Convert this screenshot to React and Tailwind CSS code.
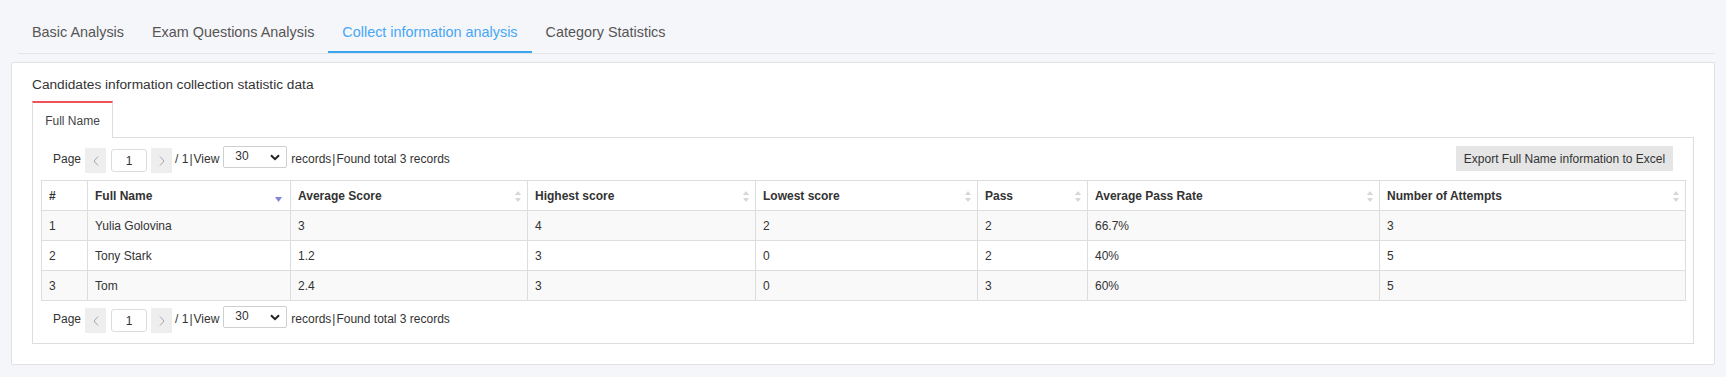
import React from 'react'

const tabs = ['Basic Analysis', 'Exam Questions Analysis', 'Collect information analysis', 'Category Statistics']

const columns = [
  { label: '#', width: 46 },
  { label: 'Full Name', width: 203, sort: 'desc' },
  { label: 'Average Score', width: 237, sort: 'both' },
  { label: 'Highest score', width: 228, sort: 'both' },
  { label: 'Lowest score', width: 222, sort: 'both' },
  { label: 'Pass', width: 110, sort: 'both' },
  { label: 'Average Pass Rate', width: 292, sort: 'both' },
  { label: 'Number of Attempts', width: 306, sort: 'both' },
]

const rows = [
  ['1', 'Yulia Golovina', '3', '4', '2', '2', '66.7%', '3'],
  ['2', 'Tony Stark', '1.2', '3', '0', '2', '40%', '5'],
  ['3', 'Tom', '2.4', '3', '0', '3', '60%', '5'],
]

function SortIcon({ type }) {
  if (type === 'desc') {
    return (
      <svg width="7" height="5" viewBox="0 0 7 5" className="absolute right-[8px] top-[16px]">
        <path d="M0 0h7L3.5 5z" fill="#7f86dc" />
      </svg>
    )
  }
  return (
    <svg width="6" height="11" viewBox="0 0 6 11" className="absolute right-[6px] top-[10px]">
      <path d="M3 0l3 4H0z" fill="#d6d6d6" />
      <path d="M0 7h6l-3 4z" fill="#d6d6d6" />
    </svg>
  )
}

function Arrow({ dir }) {
  return (
    <svg width="6" height="10" viewBox="0 0 6 10">
      <path d={dir === 'left' ? 'M5 0.5L1 5l4 4.5' : 'M1 0.5L5 5 1 9.5'} fill="none" stroke="#a5a5a5" strokeWidth="1" />
    </svg>
  )
}

function Pager() {
  return (
    <div className="flex items-start text-[12px] text-[#333]">
      <span className="leading-[26px]">Page</span>
      <span className="ml-[4px] mt-[2px] flex h-[25px] w-[21px] items-center justify-center bg-[#eeeeee]">
        <Arrow dir="left" />
      </span>
      <span className="ml-[5px] mt-[3px] flex h-[23px] w-[36px] items-center justify-center rounded-[3px] border border-[#dcdcdc] bg-white">1</span>
      <span className="ml-[4px] mt-[2px] flex h-[25px] w-[21px] items-center justify-center bg-[#eeeeee]">
        <Arrow dir="right" />
      </span>
      <span className="ml-[3px] leading-[26px]">/ 1<span className="mx-[1px]">|</span>View</span>
      <div className="ml-[4px] flex h-[22px] w-[64px] items-center justify-between rounded-[2px] border border-[#cfcfcf] bg-white pl-[11px] pr-[6px]">
        <span className="-mt-[3px]">30</span>
        <svg width="10" height="7" viewBox="0 0 10 7">
          <path d="M1 1.2l4 4 4-4" fill="none" stroke="#222" strokeWidth="2" />
        </svg>
      </div>
      <span className="ml-[4px] leading-[26px]">records<span className="mx-[1px]">|</span>Found total 3 records</span>
    </div>
  )
}

export default function App() {
  return (
    <div className="min-h-[377px] bg-[#f5f6f9] font-['Liberation_Sans',Arial,sans-serif] text-[#333]">
      {/* Tabs */}
      <div className="ml-[18px] mr-[11px] flex border-b border-[#e4e6ea] pt-[15px]">
        {tabs.map((t, i) => (
          <div
            key={t}
            className={`flex h-[38px] items-center border-b-2 px-[14px] text-[14.4px] ${
              i === 2 ? 'border-[#3aa6f2] text-[#45a7f5]' : 'border-transparent text-[#555]'
            }`}
          >
            {t}
          </div>
        ))}
      </div>

      {/* Panel */}
      <div className="mx-[11px] mt-[8px] rounded-[2px] border border-[#e2e2e2] bg-white px-[20px] pb-[20px] pt-[12px]">
        <div className="text-[13.7px] leading-[20px] text-[#333]">Candidates information collection statistic data</div>

        <div className="mt-[6px] flex">
          <div className="relative z-10 -mb-px flex h-[37px] w-[81px] items-center justify-center border-x border-t-2 border-x-[#dddddd] border-t-[#f0525a] bg-white text-[12px] text-[#444]">
            Full Name
          </div>
        </div>

        <div className="border border-[#dddddd] px-[8px] pb-[9px] pt-[8px]">
          <div className="flex h-[34px] items-start justify-between pl-[12px] pr-[12px]">
            <Pager />
            <button className="h-[25px] w-[217px] bg-[#e5e5e5] text-[12px] text-[#333]">
              Export Full Name information to Excel
            </button>
          </div>

          <table className="w-full table-fixed border-collapse text-[12px]">
            <colgroup>
              {columns.map((c) => (
                <col key={c.label} style={{ width: c.width }} />
              ))}
            </colgroup>
            <thead>
              <tr className="h-[30px] bg-white">
                {columns.map((c) => (
                  <th key={c.label} className="relative border border-[#dddddd] px-[7px] text-left font-bold text-[#333]">
                    {c.label}
                    {c.sort && <SortIcon type={c.sort} />}
                  </th>
                ))}
              </tr>
            </thead>
            <tbody>
              {rows.map((r, i) => (
                <tr key={r[0]} className={`h-[30px] ${i % 2 === 0 ? 'bg-[#f9f9f9]' : 'bg-white'}`}>
                  {r.map((v, j) => (
                    <td key={j} className="border border-[#dddddd] px-[7px] text-[#333]">
                      {v}
                    </td>
                  ))}
                </tr>
              ))}
            </tbody>
          </table>

          <div className="mt-[5px] h-[28px] pl-[12px]">
            <Pager />
          </div>
        </div>
      </div>
    </div>
  )
}
